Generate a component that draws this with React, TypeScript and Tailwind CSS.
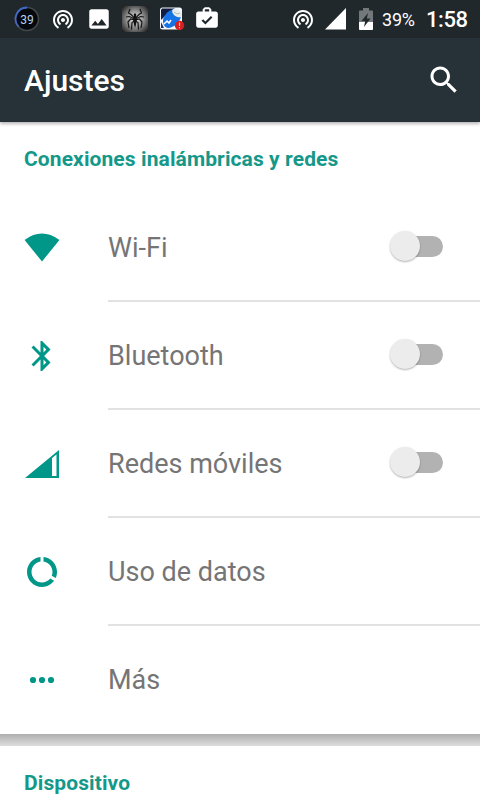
import React, { useState } from 'react'

const TetheringIcon = () => (
  <svg viewBox="0 0 24 24" className="h-6 w-6" fill="currentColor">
    <path d="M12 11c-1.1 0-2 .9-2 2s.9 2 2 2 2-.9 2-2-.9-2-2-2zm6 2c0-3.31-2.69-6-6-6s-6 2.69-6 6c0 2.22 1.21 4.15 3 5.19l1-1.74c-1.19-.7-2-1.97-2-3.45 0-2.21 1.79-4 4-4s4 1.79 4 4c0 1.48-.81 2.75-2 3.45l1 1.74c1.79-1.04 3-2.97 3-5.19zM12 3C6.48 3 2 7.48 2 13c0 3.7 2.01 6.92 4.99 8.65l1-1.73C5.61 18.53 4 15.96 4 13c0-4.42 3.58-8 8-8s8 3.58 8 8c0 2.96-1.61 5.53-4 6.92l1 1.73c2.99-1.73 5-4.95 5-8.65 0-5.52-4.48-10-10-10z" />
  </svg>
)

const SpiderIcon = () => (
  <svg viewBox="0 0 26 26" className="h-[26px] w-[26px]">
    <defs>
      <radialGradient id="web" r=".68">
        <stop offset="0" stopColor="#f2f2f2" />
        <stop offset=".45" stopColor="#969696" />
        <stop offset="1" stopColor="#1c1c1c" />
      </radialGradient>
    </defs>
    <rect width="26" height="26" fill="url(#web)" />
    <path d="M13 7l1.300 1.500-.3 2.500 1 2.500-1 5-1 3.500-1-3.500-1-5 1-2.500-.3-2.500z" fill="#111" />
    <path
      d="M12.500 12L9 8.500 6.500 7 8 3M13.500 12L17 8.500 19.500 7 18 3M12.500 13L7.500 10.500 4 11M13.500 13l5-2.500 3.500.5M12.500 14L8.500 13 6 16l1 6M13.500 14l4-1 2.500 3-1 6M12.500 15L10 16.500l-.5 7M13.500 15l2.500 1.500.5 7"
      fill="none"
      stroke="#151515"
      strokeWidth="1.200"
    />
  </svg>
)

const CleanerIcon = () => (
  <svg viewBox="0 0 26 26" className="h-[26px] w-[26px]">
    <rect x="1" y="1.5" width="22" height="22" rx="2.5" fill="#f4f7fc" />
    <path d="M3 2.500h13L6 10 2 14V4z" fill="#111d42" />
    <path d="M2 16l3 6h-3z" fill="#17336d" />
    <path d="M16 3c-5 0-11 5-12 11-.3 4 2 8 5 8 5 0 12-5 13-12z" fill="#1673e6" />
    <ellipse cx="18" cy="7" rx="5.500" ry="3.500" transform="rotate(38 18 7)" fill="#e9eced" />
    <path d="M15 6l3 2 3-1" fill="none" stroke="#abc0aa" />
    <path d="M5 18l3-3 2 2 2-3" fill="none" stroke="#fff" strokeWidth="1.500" />
    <circle cx="20.500" cy="19.500" r="4.700" fill="#d9201e" />
    <path d="M20.500 16.500v3.500M20.500 21v1.300" stroke="#f5b3b0" strokeWidth="1.200" />
  </svg>
)

const StatusBar = () => (
  <div className="flex h-[38px] items-center bg-[#20282c] pr-[11px] pl-3.5 text-white">
    <div className="flex h-[26px] w-[26px] items-center justify-center">
      <svg viewBox="0 0 26 26" className="h-[26px] w-[26px]">
        <circle cx="13" cy="13" r="11.500" fill="#05080c" stroke="#45474a" strokeWidth="1.500" />
        <path d="M13 1.500A11.500 11.500 0 0 0 4.500 20.700" fill="none" stroke="#4169c8" strokeWidth="1.800" />
        <text x="13" y="17.500" textAnchor="middle" fill="#b5d1f0" fontSize="12">39</text>
      </svg>
    </div>
    <div className="ml-[11px]"><TetheringIcon /></div>
    <svg viewBox="0 0 24 24" className="ml-[11px] h-[26px] w-[26px]" fill="currentColor">
      <path d="M21 19V5c0-1.100-.9-2-2-2H5c-1.100 0-2 .9-2 2v14c0 1.100.9 2 2 2h14c1.100 0 2-.9 2-2zM8.500 13.500l2.500 3.010L14.500 12l4.500 6H5l3.500-4.500z" />
    </svg>
    <div className="ml-2.5"><SpiderIcon /></div>
    <div className="ml-[11px]"><CleanerIcon /></div>
    <svg viewBox="0 0 24 24" className="ml-[9px] h-[26px] w-[26px] -translate-y-px" fill="currentColor">
      <path fillRule="evenodd" d="M20 6h-4V4l-2-2h-4L8 4v2H4c-1.100 0-2 .9-2 2v11c0 1.100.9 2 2 2h16c1.100 0 2-.9 2-2V8c0-1.100-.9-2-2-2zM10 4h4v2h-4zM10.500 18L7 14.500l1.400-1.400 2.100 2.100 5.100-5.100L17 11.500z" />
    </svg>
    <div className="ml-auto"><TetheringIcon /></div>
    <svg viewBox="0 0 22 22" className="ml-2.5 h-[22px] w-[22px]" fill="currentColor">
      <path d="M0 21.500L21 0v21.500z" />
    </svg>
    <svg viewBox="0 0 14 22" className="ml-3 h-[22px] w-3.5">
      <path d="M4 0h6v2.500h3q1 0 1 1V21q0 1-1 1H1q-1 0-1-1V3.500q0-1 1-1h3z" fill="#73787b" />
      <path d="M0 14h14v7q0 1-1 1H1q-1 0-1-1z" fill="#fff" />
      <path d="M9 5L7.800 10.500H11.500L5 19l1.200-6H2.500z" fill="#20282c" />
    </svg>
    <span className="ml-[9px] w-[34px] text-lg leading-[38px] tracking-[-0.2px] whitespace-nowrap pt-px">39%</span>
    <span className="ml-2.5 w-[43px] text-[22px] leading-[38px] font-medium tracking-[-0.4px] whitespace-nowrap pt-px">1:58</span>
  </div>
)

const items = [
  {
    name: 'Wi-Fi',
    toggle: true,
    icon: <path d="M.6 9.400Q18 -3.500 35.400 9.400L18 31z" transform="translate(0 .5)" />,
  },
  {
    name: 'Bluetooth',
    toggle: true,
    icon: (
      <path
        transform="scale(1.5)"
        d="M17.710 7.710L12 2h-1v7.590L6.410 5 5 6.410 10.590 12 5 17.590 6.410 19 11 14.410V22h1l5.710-5.710-4.300-4.290 4.300-4.290zM13 5.830l1.880 1.880L13 9.590V5.830zm1.880 10.460L13 18.170v-3.760l1.880 1.880z"
      />
    ),
  },
  {
    name: 'Redes móviles',
    toggle: true,
    icon: <path fillRule="evenodd" d="M1 32L35 4v28zM28 12v18h4.500V8.500z" />,
  },
  {
    name: 'Uso de datos',
    toggle: false,
    icon: (
      <path
        transform="scale(1.5)"
        d="M13 2.050v3.030c3.390.49 6 3.390 6 6.920 0 .9-.18 1.750-.48 2.540l2.600 1.530c.56-1.240.88-2.620.88-4.070 0-5.180-3.950-9.450-9-9.950zM12 19c-3.870 0-7-3.130-7-7 0-3.530 2.610-6.430 6-6.920V2.050c-5.060.5-9 4.760-9 9.950 0 5.520 4.470 10 9.990 10 3.310 0 6.240-1.610 8.060-4.090l-2.600-1.530C16.170 17.980 14.210 19 12 19z"
      />
    ),
  },
  {
    name: 'Más',
    toggle: false,
    icon: (
      <>
        <circle cx="9" cy="18" r="3.100" />
        <circle cx="18" cy="18" r="3.100" />
        <circle cx="27" cy="18" r="3.100" />
      </>
    ),
  },
]

const Toggle = ({ label }: { label: string }) => {
  const [on, setOn] = useState(false)

  return (
    <button
      role="switch"
      aria-label={label}
      aria-checked={on}
      onClick={() => setOn(!on)}
      className={`mr-[37px] mb-0.5 flex h-[21px] w-[53px] items-center rounded-full ${
        on ? 'justify-end bg-[#80cbc4]' : 'bg-linear-to-r from-transparent from-20% to-[#b2b2b2] to-20%'
      }`}
    >
      <span
        className={`h-[30px] w-[30px] shrink-0 rounded-full shadow-[0_1px_2px_rgba(0,0,0,0.3)] ${
          on ? 'bg-[#009688]' : 'bg-[#ececec]'
        }`}
      />
    </button>
  )
}

const SectionTitle = ({ children }: { children: string }) => (
  <h2 className="flex h-18 items-center pt-[3px] pl-6 text-[21px] font-bold tracking-[0.1px] text-[#14988a]">
    {children}
  </h2>
)

export default function App() {
  return (
    <div className="flex h-[800px] w-[480px] flex-col overflow-hidden bg-white font-['Roboto',sans-serif]">
      <StatusBar />
      <header className="z-10 flex h-[84px] shrink-0 items-center justify-between bg-[#263238] pr-[18px] pl-6 text-white shadow-[0_2px_3px_rgba(0,0,0,0.28)]">
        <h1 className="text-[30px] font-medium">Ajustes</h1>
        <svg viewBox="0 0 24 24" className="h-9 w-9" fill="currentColor">
          <path d="M15.500 14h-.79l-.28-.27C15.410 12.590 16 11.110 16 9.500 16 5.910 13.090 3 9.500 3S3 5.910 3 9.500 5.910 16 9.500 16c1.610 0 3.090-.59 4.230-1.570l.27.28v.79l5 4.990L20.490 19l-4.990-5zm-6 0C7.010 14 5 11.990 5 9.500S7.010 5 9.500 5 14 7.010 14 9.500 11.990 14 9.500 14z" />
        </svg>
      </header>

      <section className="shrink-0">
        <SectionTitle>Conexiones inalámbricas y redes</SectionTitle>
        {items.map((item, i) => (
          <div key={item.name} className="flex h-[108px] pl-6">
            <svg viewBox="0 0 36 36" className="mt-9 h-9 w-9 shrink-0 fill-[#009688]">
              {item.icon}
            </svg>
            <div
              className={`ml-12 flex flex-1 items-center justify-between border-b-2 ${
                i < items.length - 1 ? 'border-[#e2e2e2]' : 'border-transparent'
              }`}
            >
              <span className="pt-0.5 text-[27px] text-[#757575]">{item.name}</span>
              {item.toggle && <Toggle label={item.name} />}
            </div>
          </div>
        ))}
      </section>

      <div className="h-3 shrink-0 bg-linear-to-b from-[#aeaeae] to-[#dedede]" />
      <section>
        <SectionTitle>Dispositivo</SectionTitle>
      </section>
    </div>
  )
}
